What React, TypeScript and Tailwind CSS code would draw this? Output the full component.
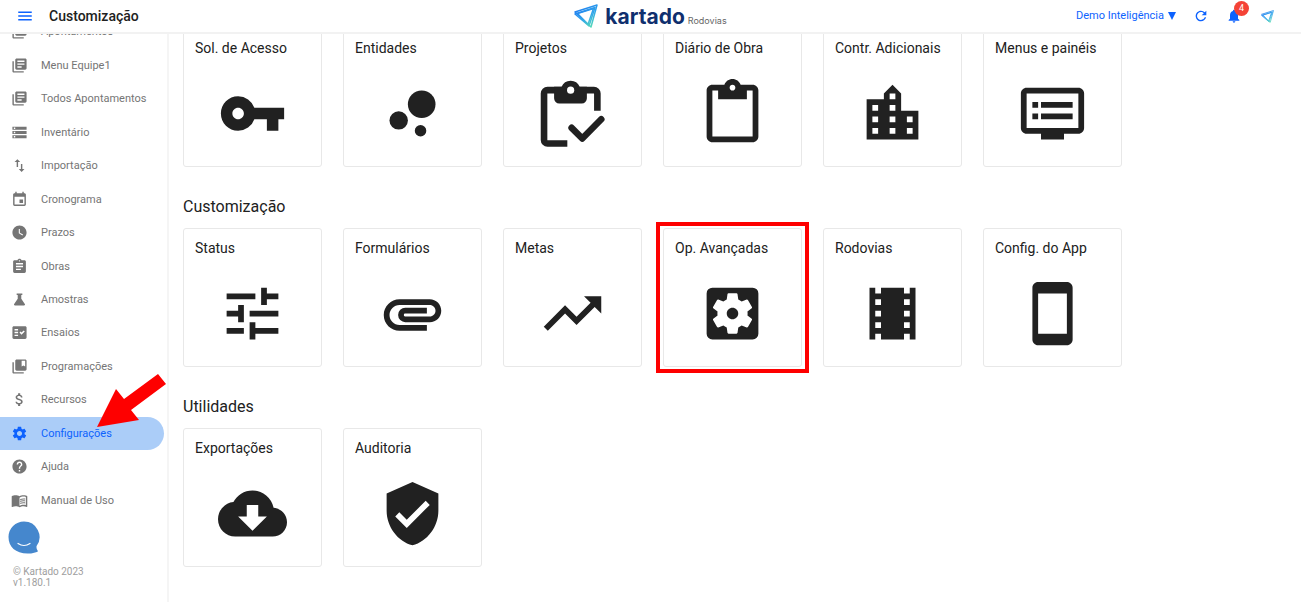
import type { ComponentType } from 'react';
import {
  MdAssignment,
  MdAttachMoney,
  MdAttachment,
  MdBubbleChart,
  MdCloudDownload,
  MdCollectionsBookmark,
  MdContentPaste,
  MdDvr,
  MdEvent,
  MdFactCheck,
  MdHelp,
  MdImportExport,
  MdLibraryBooks,
  MdLocationCity,
  MdMenu,
  MdMenuBook,
  MdNotifications,
  MdRefresh,
  MdSettings,
  MdSettingsApplications,
  MdStayPrimaryPortrait,
  MdStorage,
  MdTheaters,
  MdTrendingUp,
  MdTune,
  MdVerifiedUser,
  MdVpnKey,
  MdWatchLater,
} from 'react-icons/md';

type Icon = ComponentType<{ className?: string }>;

interface Item {
  label: string;
  icon: Icon;
  active?: boolean;
  highlight?: boolean;
}

function FlaskIcon({ className }: { className?: string }) {
  return (
    <svg viewBox="0 0 24 24" fill="currentColor" className={className} aria-hidden="true">
      <path d="M8 3.500h8v2h-1.500v5.500l5 7.500c.7 1.200.1 2-1.200 2H5.700c-1.300 0-1.900-.8-1.200-2l5-7.500V5.500H8z" />
    </svg>
  );
}

function ClipboardCheckIcon({ className }: { className?: string }) {
  return (
    <svg viewBox="0 0 24 24" className={className} aria-hidden="true">
      <path
        d="M10.200 22.450H3.300a1.200 1.200 0 0 1-1.200-1.200V5.050a1.200 1.200 0 0 1 1.200-1.200h16.150a1.200 1.200 0 0 1 1.200 1.200V11"
        fill="none"
        stroke="currentColor"
        strokeWidth="2.300"
      />
      <path
        d="M8.200 2.700a3.400 3.400 0 0 1 6.300 0H17v4a1.800 1.800 0 0 1-1.800 1.800H7.400a1.800 1.800 0 0 1-1.800-1.800v-4z"
        fill="currentColor"
      />
      <circle cx="11.350" cy="3.900" r="1.250" fill="#fff" />
      <path
        d="M11.700 17l3.700 3.700L22 14"
        fill="none"
        stroke="currentColor"
        strokeWidth="2.300"
        strokeLinecap="round"
        strokeLinejoin="round"
      />
    </svg>
  );
}

function Triangle({ className, id }: { className: string; id: string }) {
  return (
    <svg viewBox="0 0 24 24" fill="none" className={className} aria-hidden="true">
      <defs>
        <linearGradient id={id} x1="4" y1="4" x2="18" y2="24" gradientUnits="userSpaceOnUse">
          <stop offset="0" stopColor="#1f7df0" />
          <stop offset="0.5" stopColor="#2fa4ea" />
          <stop offset="1" stopColor="#5be0b4" />
        </linearGradient>
      </defs>
      <g stroke={`url(#${id})`} strokeWidth="1.500" strokeLinejoin="round">
        <path d="M1 8L23 1L17 23z" />
        <path d="M1 10L21 3.500L15 22z" />
        <path d="M3.500 9.500L19.500 4.500L14 20.500z" />
      </g>
    </svg>
  );
}

const menu: Item[] = [
  { label: 'Apontamentos', icon: MdLibraryBooks },
  { label: 'Menu Equipe1', icon: MdLibraryBooks },
  { label: 'Todos Apontamentos', icon: MdLibraryBooks },
  { label: 'Inventário', icon: MdStorage },
  { label: 'Importação', icon: MdImportExport },
  { label: 'Cronograma', icon: MdEvent },
  { label: 'Prazos', icon: MdWatchLater },
  { label: 'Obras', icon: MdAssignment },
  { label: 'Amostras', icon: FlaskIcon },
  { label: 'Ensaios', icon: MdFactCheck },
  { label: 'Programações', icon: MdCollectionsBookmark },
  { label: 'Recursos', icon: MdAttachMoney },
  { label: 'Configurações', icon: MdSettings, active: true },
  { label: 'Ajuda', icon: MdHelp },
  { label: 'Manual de Uso', icon: MdMenuBook },
];

const general: Item[] = [
  { label: 'Sol. de Acesso', icon: MdVpnKey },
  { label: 'Entidades', icon: MdBubbleChart },
  { label: 'Projetos', icon: ClipboardCheckIcon },
  { label: 'Diário de Obra', icon: MdContentPaste },
  { label: 'Contr. Adicionais', icon: MdLocationCity },
  { label: 'Menus e painéis', icon: MdDvr },
];

const customization: Item[] = [
  { label: 'Status', icon: MdTune },
  { label: 'Formulários', icon: MdAttachment },
  { label: 'Metas', icon: MdTrendingUp },
  { label: 'Op. Avançadas', icon: MdSettingsApplications, highlight: true },
  { label: 'Rodovias', icon: MdTheaters },
  { label: 'Config. do App', icon: MdStayPrimaryPortrait },
];

const utilities: Item[] = [
  { label: 'Exportações', icon: MdCloudDownload },
  { label: 'Auditoria', icon: MdVerifiedUser },
];

function Header() {
  return (
    <header className="relative z-10 grid h-[34px] shrink-0 grid-cols-[1fr_auto_1fr] items-center border-b-2 border-[#f2f2f2] bg-white">
      <div className="flex items-center gap-[15px] pl-4">
        <button type="button" aria-label="Menu" className="text-[#0d62fe]">
          <MdMenu className="size-[18px]" />
        </button>
        <h1 className="text-[14px] leading-5 font-medium text-[#212121]">Customização</h1>
      </div>

      <a href="#" className="flex items-center gap-[7px]">
        <Triangle id="logo" className="size-6" />
        <span className="flex items-baseline gap-[3px] pt-px font-[Inter]">
          <span className="text-[21px] leading-7 font-bold text-[#0f2f6e]">kartado</span>
          <span className="text-[9px] text-[#666]">Rodovias</span>
        </span>
      </a>

      <div className="flex items-center justify-end gap-[17px] pr-[26px] text-[#0d62fe]">
        <button type="button" className="flex items-center gap-1 text-[11px] leading-4">
          Demo Inteligência
          <svg viewBox="0 0 8 8" className="size-2 fill-current" aria-hidden="true">
            <path d="M0 0h8L4 8z" />
          </svg>
        </button>
        <button type="button" aria-label="Atualizar">
          <MdRefresh className="size-4" />
        </button>
        <button type="button" aria-label="Notificações" className="relative">
          <MdNotifications className="size-4" />
          <span className="absolute -top-[7px] left-2 flex size-[15px] items-center justify-center rounded-full bg-[#f44336] text-[9px] text-white">
            4
          </span>
        </button>
        <button type="button" aria-label="Kartado" className="flex w-4 justify-center">
          <Triangle id="logo-small" className="size-[13px]" />
        </button>
      </div>
    </header>
  );
}

function Sidebar() {
  return (
    <aside className="flex w-[169px] shrink-0 flex-col overflow-hidden border-r-2 border-[#f5f5f5]">
      <nav className="-mt-[19px] flex flex-1 flex-col">
        {menu.map(({ label, icon: Icon, active }) => (
          <a
            key={label}
            href="#"
            className={`relative mr-[3px] flex flex-1 items-center gap-[13px] rounded-r-full pl-[11px] text-[11px] leading-4 ${
              active ? 'bg-[#abcdf8] text-[#0d62fe]' : 'text-[#757575]'
            }`}
          >
            <Icon className="size-[17px]" />
            <span className="pt-px">{label}</span>
            {active && (
              <svg viewBox="0 0 70 54" className="absolute -top-[43px] left-[97px] w-[70px] fill-[#fe0000]" aria-hidden="true">
                <path d="M0 53L19 15L27 25L61 0L69 10L34 36L42 46z" />
              </svg>
            )}
          </a>
        ))}
      </nav>

      <footer className="h-[85px] shrink-0 pt-1 pl-2">
        <button type="button" aria-label="Abrir chat" className="block">
          <svg viewBox="0 0 32 33" className="h-[33px] w-8" aria-hidden="true">
            <path
              d="M16 .5a15.500 15.500 0 0 1 12.600 24.500c-.4 1.500.2 3.500 1 4.600.4.700.1 1.100-.7 1.400-2.300.8-5 1.500-8 1.500C8 33 .5 26 .5 16A15.500 15.500 0 0 1 16 .5z"
              fill="#4587cd"
            />
            <path d="M10 22.500q6 4 12 0" fill="none" stroke="#fff" strokeWidth="1.200" strokeLinecap="round" />
          </svg>
        </button>
        <p className="mt-3 pl-[5px] text-[10px] leading-[11px] text-[#9e9e9e]">
          © Kartado 2023
          <br />
          v1.180.1
        </p>
      </footer>
    </aside>
  );
}

function CardGrid({ items }: { items: Item[] }) {
  return (
    <div className="flex flex-wrap gap-[21px]">
      {items.map(({ label, icon: Icon, highlight }) => (
        <a
          key={label}
          href="#"
          className="relative flex size-[139px] flex-col rounded-[3px] border border-[#e8e8e8] text-[#212121]"
        >
          <span className="px-[11px] pt-[9px] pb-[3px] text-[14px] leading-5">{label}</span>
          <span className="flex flex-1 items-center justify-center">
            <Icon className="size-[69px]" />
          </span>
          {highlight && <span className="absolute -inset-x-2 -inset-y-[7px] border-4 border-[#fe0000]" />}
        </a>
      ))}
    </div>
  );
}

function Section({ title, items }: { title: string; items: Item[] }) {
  return (
    <section>
      <h2 className="pt-7 pb-[9px] text-[16px] leading-6 text-[#212121]">{title}</h2>
      <CardGrid items={items} />
    </section>
  );
}

export default function App() {
  return (
    <div className="flex h-screen flex-col overflow-hidden bg-white font-[Roboto,sans-serif]">
      <Header />
      <div className="flex min-h-0 flex-1">
        <Sidebar />
        <main className="min-w-0 flex-1 overflow-hidden px-[14px]">
          <div className="-mt-[6px]">
            <CardGrid items={general} />
            <Section title="Customização" items={customization} />
            <Section title="Utilidades" items={utilities} />
          </div>
        </main>
      </div>
    </div>
  );
}
